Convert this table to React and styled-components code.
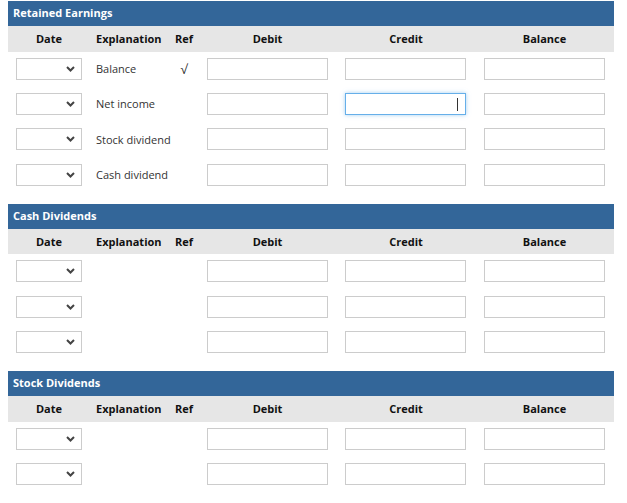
import React from "react";
import styled, { createGlobalStyle } from "styled-components";

const GlobalStyle = createGlobalStyle`
  body {
    margin: 0;
    padding: 1px 13px 0 8px;
    background: #fff;
    font-family: "Open Sans", "Noto Sans", Arial, sans-serif;
    font-size: 11px;
    color: #333;
  }
`;

const Section = styled.div`
  margin-bottom: 11px;
`;

const Title = styled.div`
  height: 25px;
  line-height: 24px;
  background: #336699;
  color: #fff;
  font-weight: bold;
  padding-left: 5px;
`;

const Grid = styled.div`
  display: grid;
  grid-template-columns: 82px 80px 28px 139px 138px 139px;
`;

const HeadCell = styled.div`
  height: 25.5px;
  background: #e6e6e6;
  color: #111;
  font-weight: bold;
  white-space: nowrap;
  display: flex;
  align-items: center;
  justify-content: ${(p) => (p.$left ? "flex-start" : "center")};
  padding-left: ${(p) => p.$pl || 0}px;
  padding-bottom: 1px;
  box-sizing: border-box;
`;

const Cell = styled.div`
  height: 35.33px;
  display: flex;
  align-items: center;
  justify-content: ${(p) => (p.$center ? "center" : "flex-start")};
  padding-left: ${(p) => p.$pl || 0}px;
  padding-bottom: 1px;
  box-sizing: border-box;
  white-space: nowrap;
`;

const SelectBox = styled.div`
  width: 66px;
  height: 22px;
  box-sizing: border-box;
  border: 1px solid #ccc;
  background: #fff;
  display: flex;
  align-items: center;
  justify-content: flex-end;
  padding-right: 6px;
`;

const InputBox = styled.div`
  position: relative;
  width: 121px;
  height: 22px;
  box-sizing: border-box;
  border: 1px solid ${(p) => (p.$focused ? "#66afe9" : "#ccc")};
  box-shadow: ${(p) => (p.$focused ? "0 0 4px rgba(102,175,233,0.6)" : "none")};
  background: #fff;
`;

const Caret = styled.span`
  position: absolute;
  right: 7px;
  top: 4px;
  width: 1px;
  height: 13px;
  background: #333;
`;

const Check = styled.span`
  font-size: 13px;
  color: #333;
`;

const Chevron = () => (
  <svg width="9" height="6" viewBox="0 0 9 6">
    <path d="M1 1 L4.5 4.5 L8 1" fill="none" stroke="#444" strokeWidth="2" />
  </svg>
);

const Ledger = ({ title, rows }) => (
  <Section>
    <Title>{title}</Title>
    <Grid>
      <HeadCell>Date</HeadCell>
      <HeadCell $left $pl={6}>Explanation</HeadCell>
      <HeadCell $left $pl={5}>Ref</HeadCell>
      <HeadCell>Debit</HeadCell>
      <HeadCell>Credit</HeadCell>
      <HeadCell>Balance</HeadCell>
      {rows.map((r, i) => (
        <React.Fragment key={i}>
          <Cell $pl={8}>
            <SelectBox>
              <Chevron />
            </SelectBox>
          </Cell>
          <Cell $pl={6}>{r.text}</Cell>
          <Cell $center>{r.ref && <Check>√</Check>}</Cell>
          <Cell $pl={9}>
            <InputBox />
          </Cell>
          <Cell $pl={8}>
            <InputBox $focused={r.focus}>{r.focus && <Caret />}</InputBox>
          </Cell>
          <Cell $pl={9}>
            <InputBox />
          </Cell>
        </React.Fragment>
      ))}
    </Grid>
  </Section>
);

const App = () => (
  <>
    <GlobalStyle />
    <Ledger
      title="Retained Earnings"
      rows={[
        { text: "Balance", ref: true },
        { text: "Net income", focus: true },
        { text: "Stock dividend" },
        { text: "Cash dividend" },
      ]}
    />
    <Ledger title="Cash Dividends" rows={[{}, {}, {}]} />
    <Ledger title="Stock Dividends" rows={[{}, {}]} />
  </>
);

export default App;
